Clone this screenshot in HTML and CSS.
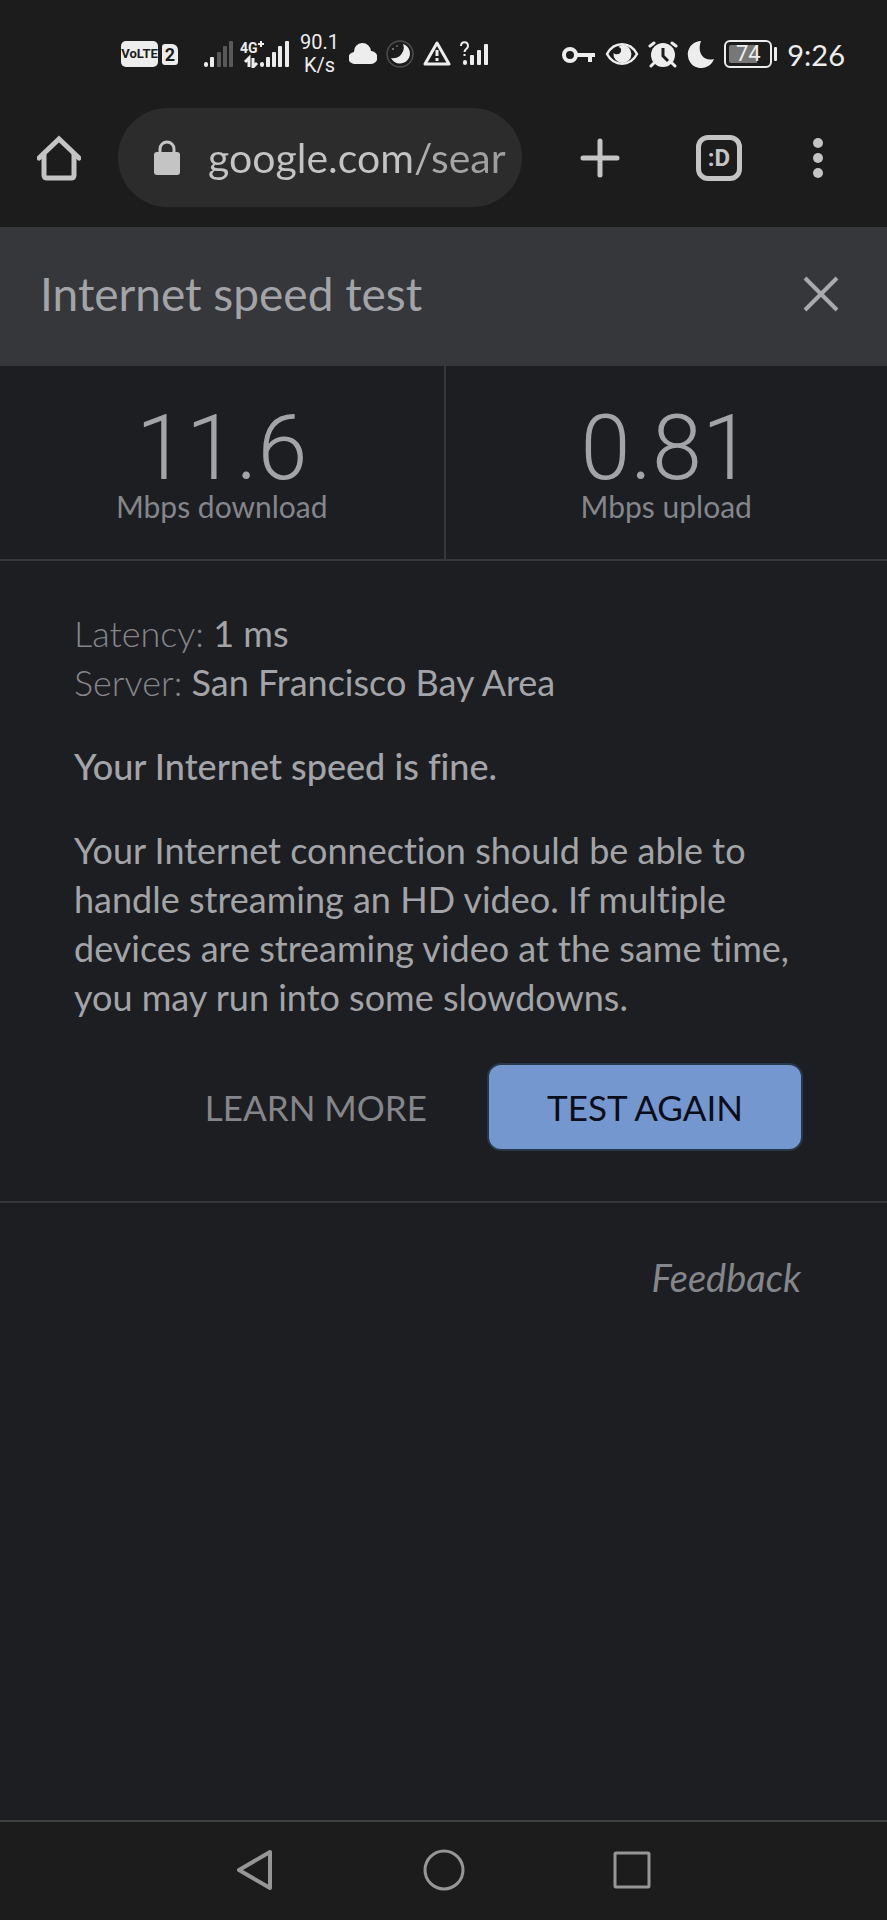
FILE: index.html
```html
<!DOCTYPE html>
<html lang="en">
  <head>
    <meta charset="UTF-8" />
    <meta name="viewport" content="width=device-width, initial-scale=1.0" />
    <title>Internet speed test</title>
    <link rel="stylesheet" href="styles.css">
  </head>
  <body>
    <div class="status-bar">
      <div class="status-group status-left">
        <div class="sim">
          <span class="volte">VoLTE</span>
          <span class="sim-number">2</span>
        </div>
        <div class="signals">
          <svg width="30" height="28" viewBox="0 0 30 28">
            <g fill="#ededed">
              <rect x="0" y="22" width="4" height="5" rx="2" />
              <rect x="6" y="17" width="4" height="10" rx="1" />
            </g>
            <g fill="#595959">
              <rect x="13" y="12" width="4" height="15" rx="1" />
              <rect x="19" y="6" width="4" height="21" rx="1" />
              <rect x="25" y="1" width="4" height="26" rx="1" />
            </g>
          </svg>
          <svg width="50" height="28" viewBox="0 0 50 28" fill="#ededed">
            <text x="0" y="13" class="network-text">4G</text>
            <path d="M21 1v6M18 4h6" stroke="#ededed" stroke-width="2" />
            <path d="M9 27V18l-4 4M13 18v9l4-4" fill="none" stroke="#ededed" stroke-width="3" />
            <rect x="20" y="22" width="4" height="5" rx="2" />
            <rect x="26" y="17" width="4" height="10" rx="1" />
            <rect x="32" y="12" width="4" height="15" rx="1" />
            <rect x="38" y="6" width="4" height="21" rx="1" />
            <rect x="45" y="1" width="4" height="26" rx="1" />
          </svg>
        </div>
        <div class="net-speed">90.1<br>K/s</div>
        <div class="notices">
          <svg width="28" height="28" viewBox="0 0 28 28">
            <path d="M6 24a6 6 0 0 1-1-12a8.500 8.500 0 0 1 17-1a6.500 6.500 0 0 1 0 13z" fill="#ededed" />
          </svg>
          <svg width="28" height="28" viewBox="0 0 28 28">
            <circle cx="14" cy="14" r="13" fill="none" stroke="#4c4c4c" stroke-width="1.500" />
            <path d="M17 4a10 10 0 1 1-12 14a10.500 10.500 0 0 0 12-14z" fill="#ededed" />
            <circle cx="7" cy="9" r="1" fill="#8a8a8a" />
            <circle cx="11" cy="6" r="1" fill="#666666" />
          </svg>
          <svg width="28" height="28" viewBox="0 0 28 28">
            <path d="M14 3L26 24H2z" fill="none" stroke="#ededed" stroke-width="3" stroke-linejoin="round" />
            <path d="M14 10v6M14 18v3" stroke="#ededed" stroke-width="3" />
          </svg>
          <svg width="28" height="28" viewBox="0 0 28 28">
            <path d="M1 6c0-5 7-5 7 0c0 3-3.500 3-3.500 6M4.500 14v2" fill="none" stroke="#ededed" stroke-width="2" />
            <g fill="#ededed">
              <rect x="3" y="20" width="4" height="5" rx="2" />
              <rect x="10" y="15" width="4" height="10" rx="1" />
              <rect x="17" y="10" width="4" height="15" rx="1" />
              <rect x="24" y="4" width="4" height="21" rx="1" />
            </g>
          </svg>
        </div>
      </div>
      <div class="status-group status-right">
        <svg width="34" height="28" viewBox="0 0 34 28" fill="none" stroke="#ededed" stroke-width="4">
          <circle cx="8" cy="15" r="6" />
          <path d="M14 15h19M28 15v7" />
        </svg>
        <svg width="34" height="28" viewBox="0 0 34 28">
          <path d="M2 14C9 1 25 1 32 14C25 27 9 27 2 14z" fill="none" stroke="#ededed" stroke-width="2.500" stroke-linejoin="round" />
          <path d="M17 5a9 9 0 1 1-8.500 8c2 2 7 2 7.500-2c.4-3-1-4-3-4z" fill="#ededed" />
        </svg>
        <svg width="30" height="28" viewBox="0 0 30 28">
          <circle cx="15" cy="15" r="12" fill="#ededed" />
          <path d="M2 6l4-3M28 6l-4-3M6 23l-3 3M24 23l3 3" stroke="#ededed" stroke-width="3" stroke-linecap="round" />
          <path d="M15 8v8l5 5" fill="none" stroke="#1c1c1c" stroke-width="3" />
        </svg>
        <svg width="28" height="28" viewBox="0 0 28 28">
          <path d="M14 1A13.500 13.500 0 1 0 27 19C15 22 10 11 14 1z" fill="#ededed" />
        </svg>
        <div class="battery"><span class="battery-level">74</span></div>
        <span class="clock">9:26</span>
      </div>
    </div>

    <div class="toolbar">
      <button class="icon-button" aria-label="Home">
        <svg width="44" height="46" viewBox="0 0 44 46" fill="none" stroke="#c4c4c4" stroke-width="5" stroke-linecap="round" stroke-linejoin="round">
          <path d="M2 23L22 4L42 23" stroke-linejoin="miter" />
          <path d="M7 19V40q0 3 3 3H34q3 0 3-3V19" />
        </svg>
      </button>
      <label class="address">
        <svg width="28" height="36" viewBox="0 0 28 36">
          <path d="M7 14V9a7 7 0 0 1 14 0v5" fill="none" stroke="#c4c4c4" stroke-width="3" />
          <rect x="1" y="12" width="26" height="23" rx="3" fill="#c4c4c4" />
        </svg>
        <input type="text" value="google.com/sear" aria-label="Web address" />
      </label>
      <button class="icon-button" aria-label="New tab">
        <svg width="40" height="40" viewBox="0 0 40 40" stroke="#c4c4c4" stroke-width="5" stroke-linecap="round">
          <path d="M20 3v34M3 20h34" />
        </svg>
      </button>
      <button class="tabs-button" aria-label="Open tabs">:D</button>
      <button class="icon-button" aria-label="Menu">
        <svg width="10" height="40" viewBox="0 0 10 40" fill="#c4c4c4">
          <circle cx="5" cy="5" r="5" />
          <circle cx="5" cy="20" r="5" />
          <circle cx="5" cy="35" r="5" />
        </svg>
      </button>
    </div>

    <main class="page">
      <div class="header">
        <h1>Internet speed test</h1>
        <button class="icon-button" aria-label="Close">
          <svg width="36" height="36" viewBox="0 0 36 36" stroke="#a9aaad" stroke-width="4">
            <path d="M2 2l32 32M34 2L2 34" />
          </svg>
        </button>
      </div>
      <div class="results">
        <div class="result">
          <div class="value">11.6</div>
          <div class="unit">Mbps download</div>
        </div>
        <div class="result">
          <div class="value">0.81</div>
          <div class="unit">Mbps upload</div>
        </div>
      </div>
      <div class="details">
        <div><span class="name">Latency:</span> <span class="detail">1 ms</span></div>
        <div><span class="name">Server:</span> <span class="detail">San Francisco Bay Area</span></div>
        <p class="verdict">Your Internet speed is fine.</p>
        <p>Your Internet connection should be able to handle streaming an HD video. If multiple devices are streaming video at the same time, you may run into some slowdowns.</p>
        <div class="actions">
          <a class="learn-more" href="#">LEARN MORE</a>
          <button class="test-again">TEST AGAIN</button>
        </div>
      </div>
      <div class="footer">
        <a class="feedback" href="#">Feedback</a>
      </div>
    </main>

    <nav class="nav-bar">
      <button class="icon-button" aria-label="Back">
        <svg width="40" height="42" viewBox="0 0 40 42" fill="none" stroke="#969696" stroke-width="4" stroke-linejoin="round">
          <path d="M34 3V39L3 21z" />
        </svg>
      </button>
      <button class="icon-button" aria-label="Home screen">
        <svg width="42" height="42" viewBox="0 0 42 42" fill="none" stroke="#969696" stroke-width="3">
          <circle cx="21" cy="21" r="19" />
        </svg>
      </button>
      <button class="icon-button" aria-label="Recent apps">
        <svg width="40" height="42" viewBox="0 0 40 42" fill="none" stroke="#969696" stroke-width="3">
          <rect x="3" y="4" width="34" height="34" rx="1" />
        </svg>
      </button>
    </nav>
  </body>
</html>
```
FILE: styles.css
```css
* {
  box-sizing: border-box;
}
body {
  font-family: Lato, "Open Sans", sans-serif;
  font-variant-ligatures: none;
  margin: 0;
  min-height: 100vh;
  display: flex;
  flex-direction: column;
  background-color: #1c1c1c;
  color: #a3a4a7;
  font-size: 36px;
  line-height: 49px;
}
svg {
  display: block;
  flex: none;
}
button {
  font-family: inherit;
  margin: 0;
  padding: 0;
  border: none;
  background: none;
  color: inherit;
  cursor: pointer;
}
a {
  color: #85868a;
  text-decoration: none;
}

/* status bar */
.status-bar {
  height: 108px;
  padding: 0 42px 0 121px;
  display: flex;
  justify-content: space-between;
  align-items: center;
  color: #ededed;
}
.status-group {
  display: flex;
  align-items: center;
}
.status-left {
  gap: 10px;
}
.status-right {
  gap: 9px;
}
.sim {
  display: flex;
  align-items: center;
  gap: 4px;
  margin-right: 16px;
}
.volte,
.sim-number {
  background-color: #ededed;
  color: #1c1c1c;
  font-family: Roboto, sans-serif;
  font-weight: 700;
  text-align: center;
}
.volte {
  width: 37px;
  border-radius: 5px;
  font-size: 13px;
  line-height: 26px;
}
.sim-number {
  width: 16px;
  border-radius: 3px 6px 3px 3px;
  font-size: 18px;
  line-height: 21px;
}
.signals {
  display: flex;
  gap: 6px;
}
.network-text {
  font-family: Roboto, sans-serif;
  font-size: 14px;
  font-weight: 700;
}
.net-speed {
  font-family: Roboto, sans-serif;
  font-size: 20px;
  line-height: 23px;
  text-align: center;
}
.notices {
  display: flex;
  gap: 9px;
}
.battery {
  width: 48px;
  height: 28px;
  margin-right: 6px;
  padding: 3px;
  position: relative;
  border: 2px solid #ededed;
  border-radius: 6px;
}
/* battery terminal */
.battery::after {
  content: "";
  position: absolute;
  top: 5px;
  right: -7px;
  width: 3px;
  height: 14px;
  border-radius: 1px;
  background-color: #ededed;
}
.battery-level {
  display: block;
  background: linear-gradient(to right, #777777 74%, transparent 74%);
  border-radius: 2px;
  font-family: Roboto, sans-serif;
  font-size: 22px;
  line-height: 18px;
  text-align: center;
}
.clock {
  font-size: 29px;
}

/* browser toolbar */
.toolbar {
  height: 119px;
  padding: 0 64px 20px 37px;
  display: flex;
  align-items: center;
}
.address {
  flex: 1;
  min-width: 0;
  height: 99px;
  margin: 0 58px 0 37px;
  padding: 0 16px 0 35px;
  display: flex;
  align-items: center;
  gap: 27px;
  border-radius: 50px;
  background-color: #2c2c2c;
}
.address input {
  flex: 1;
  min-width: 0;
  padding: 0;
  border: none;
  outline: none;
  font-family: inherit;
  font-size: 41px;
  color: transparent;
  background: linear-gradient(to right, #c4c4c4 66%, #aaaaaa 74%, #9c9c9c);
  -webkit-background-clip: text;
  background-clip: text;
}
.tabs-button {
  width: 46px;
  height: 46px;
  margin: 0 71px 0 76px;
  border: 5px solid #c4c4c4;
  border-radius: 12px;
  color: #c4c4c4;
  font-family: Roboto, sans-serif;
  font-size: 24px;
  font-weight: 700;
  line-height: 34px;
}

/* speed test card */
.page {
  flex: 1;
  background-color: #1d1e22;
}
.header {
  height: 139px;
  padding: 0 48px 6px 40px;
  display: flex;
  justify-content: space-between;
  align-items: center;
  background-color: #36373b;
}
h1 {
  margin: 0;
  font-size: 46px;
  font-weight: 400;
}
.results {
  display: grid;
  grid-template-columns: 1fr 1fr;
  border-bottom: 2px solid #36373b;
}
.result {
  padding: 44px 0 35px;
  text-align: center;
}
.result + .result {
  border-left: 2px solid #36373b;
}
.value {
  font-family: Roboto, sans-serif;
  font-size: 90px;
  font-weight: 300;
  line-height: 78px;
}
.unit {
  color: #85868a;
  font-size: 30px;
  line-height: 36px;
}
.details {
  padding: 48px 86px 52px 74px;
  border-bottom: 2px solid #36373b;
}
.details p {
  margin: 35px 0 0;
}
.name {
  color: #85868a;
  font-weight: 300;
}
.details .verdict {
  font-weight: 500;
}
.actions {
  margin-top: 43px;
  display: flex;
  justify-content: flex-end;
  align-items: center;
  gap: 62px;
  font-size: 35px;
}
.test-again {
  width: 312px;
  height: 84px;
  border-radius: 12px;
  background-color: #7597d0;
  box-shadow: 0 0 0 2px #26384a;
  color: #0a0e1a;
  font-size: 35px;
}
.footer {
  padding: 50px 86px;
  text-align: right;
}
.feedback {
  font-size: 38px;
  font-style: italic;
}

/* system navigation */
.nav-bar {
  height: 100px;
  padding-bottom: 2px;
  display: flex;
  justify-content: center;
  align-items: center;
  gap: 147px;
  border-top: 2px solid #414144;
}
```
